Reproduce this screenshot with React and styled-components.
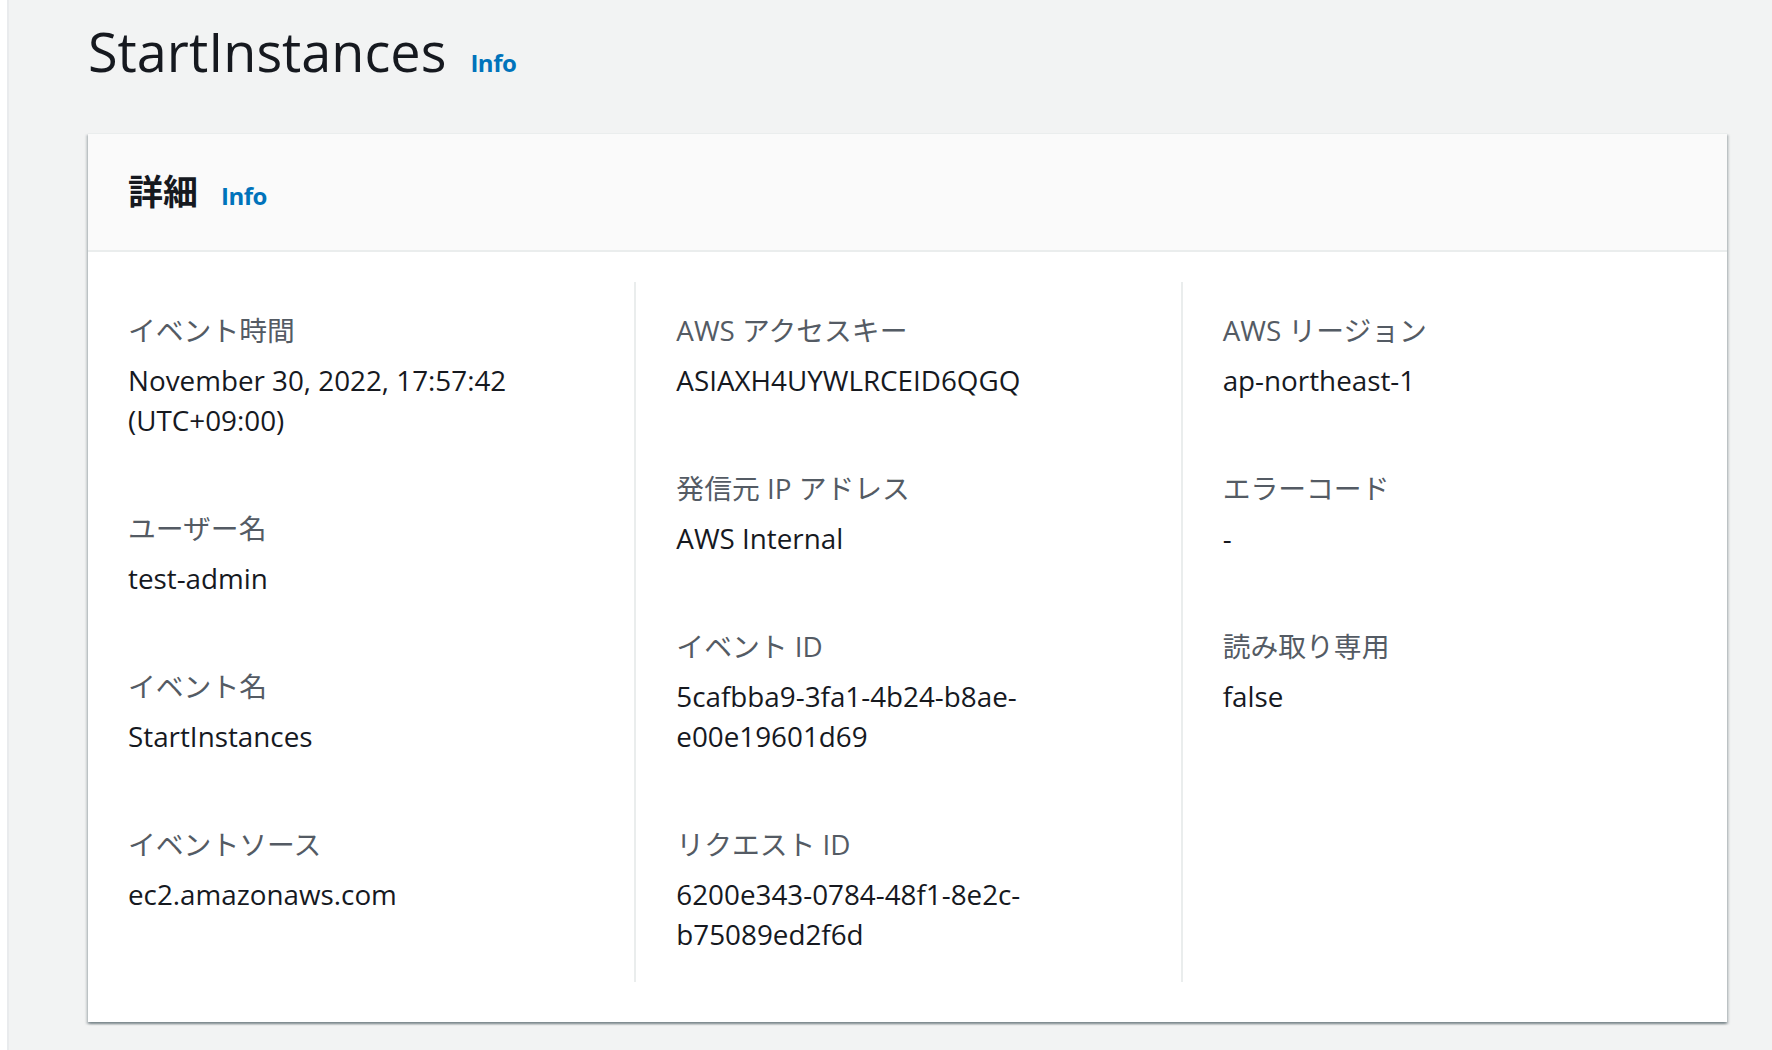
import React from "react";
import styled, { createGlobalStyle } from "styled-components";

const GlobalStyle = createGlobalStyle`
  html, body {
    margin: 0;
    padding: 0;
    background-color: #f2f3f3;
  }
  body {
    font-family: "Open Sans", "Noto Sans CJK JP", sans-serif;
    color: #16191f;
  }
`;

const StyledPage = styled.div`
  display: flex;
  min-height: 100vh;

  & > .nav_edge {
    flex: 0 0 7px;
    background-color: #fff;
    border-right: 2px solid #e9ebed;
  }

  & > .main {
    flex: 1;
    padding: 15px 45px 0 79px;
  }
`;

const TitleRow = styled.div`
  display: flex;
  align-items: baseline;
  gap: 24px;
  margin-bottom: 46px;

  & > h1 {
    margin: 0;
    font-size: 54px;
    line-height: 72px;
    font-weight: 400;
    color: #16191f;
  }
`;

const InfoLink = styled.a`
  font-family: "Open Sans", sans-serif;
  font-size: ${(props) => props.size || 24}px;
  line-height: 30px;
  font-weight: 700;
  letter-spacing: -0.5px;
  color: #0073bb;
  text-decoration: none;
  cursor: pointer;
`;

const Card = styled.div`
  background-color: #fff;
  border-top: 1px solid #eaeded;
  box-shadow: 0 2px 2px 0 rgba(0, 28, 36, 0.3),
    2px 2px 2px 0 rgba(0, 28, 36, 0.15),
    -2px 2px 2px 0 rgba(0, 28, 36, 0.15);

  & > .header {
    box-sizing: border-box;
    height: 118px;
    display: flex;
    align-items: baseline;
    gap: 23px;
    padding: 34px 40px 0;
    background-color: #fafafa;
    border-bottom: 2px solid #eaeded;

    h2 {
      margin: 0;
      font-family: "Noto Sans CJK JP", sans-serif;
      font-size: 35px;
      line-height: 44px;
      font-weight: 700;
    }
  }

  & > .body {
    display: grid;
    grid-template-columns: repeat(3, 1fr);
    padding: 30px 0 40px;
  }
`;

const Column = styled.div`
  box-sizing: border-box;
  min-width: 0;
  padding: 28px 40px;
  border-left: ${(props) => (props.first ? "none" : "2px solid #eaeded")};
  display: flex;
  flex-direction: column;
  gap: 68px;
`;

const Field = styled.div`
  & > .label {
    font-size: 27.8px;
    line-height: 40px;
    color: #545b64;
    margin-bottom: 10px;
  }

  & > .value {
    font-size: 27.8px;
    line-height: 40px;
    color: #16191f;
    overflow-wrap: break-word;
  }
`;

const columns = [
  [
    { label: "イベント時間", value: "November 30, 2022, 17:57:42 (UTC+09:00)" },
    { label: "ユーザー名", value: "test-admin" },
    { label: "イベント名", value: "StartInstances" },
    { label: "イベントソース", value: "ec2.amazonaws.com" },
  ],
  [
    { label: "AWS アクセスキー", value: "ASIAXH4UYWLRCEID6QGQ" },
    { label: "発信元 IP アドレス", value: "AWS Internal" },
    { label: "イベント ID", value: "5cafbba9-3fa1-4b24-b8ae-e00e19601d69" },
    { label: "リクエスト ID", value: "6200e343-0784-48f1-8e2c-b75089ed2f6d" },
  ],
  [
    { label: "AWS リージョン", value: "ap-northeast-1" },
    { label: "エラーコード", value: "-" },
    { label: "読み取り専用", value: "false" },
  ],
];

const App = () => {
  return (
    <>
      <GlobalStyle />
      <StyledPage>
        <div className="nav_edge"></div>
        <div className="main">
          <TitleRow>
            <h1>StartInstances</h1>
            <InfoLink>Info</InfoLink>
          </TitleRow>
          <Card>
            <div className="header">
              <h2>詳細</h2>
              <InfoLink>Info</InfoLink>
            </div>
            <div className="body">
              {columns.map((fields, i) => (
                <Column key={i} first={i === 0}>
                  {fields.map((f) => (
                    <Field key={f.label}>
                      <div className="label">{f.label}</div>
                      <div className="value">{f.value}</div>
                    </Field>
                  ))}
                </Column>
              ))}
            </div>
          </Card>
        </div>
      </StyledPage>
    </>
  );
};

export default App;
